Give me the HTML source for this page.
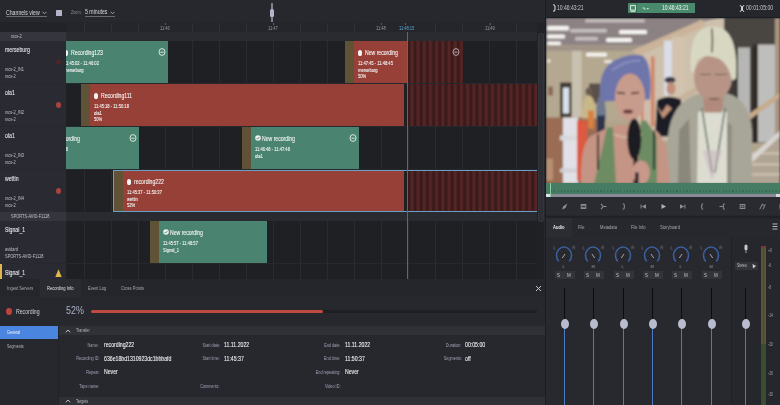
<!DOCTYPE html>
<html><head><meta charset="utf-8">
<style>
*{margin:0;padding:0;box-sizing:border-box}
html,body{width:780px;height:405px;overflow:hidden;background:#26272c;font-family:"Liberation Sans",sans-serif;color:#d8d8dc}
.a{position:absolute}
.t{position:absolute;white-space:nowrap;line-height:1;transform:scaleX(.74);transform-origin:0 0}
.lc{position:absolute;left:0;width:65.5px;background:#292a32}
.tr{position:absolute;left:66px;width:471px;background:#1f2024 repeating-linear-gradient(90deg,transparent 0,transparent 18px,#2a2b30 18px,#2a2b30 19px,transparent 19px,transparent 27px)}
.gl{position:absolute;left:0;width:65.5px;background:#35363d}
.gr{position:absolute;left:66px;width:471px;background:#2a2b30}
.blk{position:absolute;overflow:hidden}
.green{background:#4a8470}
.red{background:#974038}
.brown{background:#5f5236}
.stripe{background:repeating-linear-gradient(90deg,#3a1b1c 0px,#3a1b1c 1.6px,#552424 3.1px,#552424 4.6px,#3a1b1c 6.2px)}
.bt{font-size:7px;color:#f6f6f6;transform:scaleX(.73);-webkit-text-stroke:.1px #f6f6f6}
.bs{font-size:5.4px;color:#f4f4f4;transform:scaleX(.76);-webkit-text-stroke:.1px #f4f4f4}
.nm{font-size:7px;color:#ececf0;-webkit-text-stroke:.08px #ececf0}
.sm{font-size:5.2px;color:#c0c0c6;transform:scaleX(.76)}
.rt{font-size:5.4px;color:#9a9aa0}
.tick{position:absolute;top:23px;width:1px;height:9px;background:#303137}
.dot{position:absolute;width:4.2px;height:6px;border-radius:50%;background:#f4f4f4}
</style></head><body>
<div id="root" style="position:absolute;left:0;top:0;width:780px;height:405px;overflow:hidden;filter:blur(.3px)">
<div class="a" style="left:0;top:0;width:545px;height:405px;background:#27282d"></div>
<div class="t nm" style="left:6px;top:8.7px;color:#d8d8dc;-webkit-text-stroke:0">Channels view</div>
<div class="a" style="left:6px;top:16px;width:41px;height:1px;background:#6a6a70;"></div>
<svg class="a" style="left:42px;top:11px" width="5" height="4"><path d="M0.5 0.8 L2.5 2.8 L4.5 0.8" stroke="#b0b0b4" stroke-width="0.9" fill="none"/></svg>
<div class="a" style="left:55.5px;top:9.5px;width:6px;height:6.5px;background:#b4b4c8;border-radius:.5px"></div>
<div class="t " style="left:71px;top:9.5px;font-size:5px;color:#8c8c92">Zoom:</div>
<div class="t nm" style="left:85px;top:8.2px;color:#d8d8dc;-webkit-text-stroke:0">5 minutes</div>
<div class="a" style="left:85px;top:16px;width:30px;height:1px;background:#6a6a70;"></div>
<svg class="a" style="left:110px;top:11px" width="5" height="4"><path d="M0.5 0.8 L2.5 2.8 L4.5 0.8" stroke="#b0b0b4" stroke-width="0.9" fill="none"/></svg>
<div class="a" style="left:271.3px;top:3px;width:1.4px;height:18.5px;background:#80808e;"></div>
<div class="a" style="left:270px;top:8.8px;width:4px;height:8px;background:#b4b4c8;border-radius:1.5px"></div>
<div class="a" style="left:0px;top:22px;width:545px;height:10px;background:#222328;"></div>
<div class="a" style="left:66px;top:22px;width:471px;height:10px;background:#25262b;"></div>
<div class="tick" style="left:84.4px"></div>
<div class="tick" style="left:111.4px"></div>
<div class="tick" style="left:138.4px"></div>
<div class="tick" style="left:192.4px"></div>
<div class="tick" style="left:219.4px"></div>
<div class="tick" style="left:246.4px"></div>
<div class="tick" style="left:300.4px"></div>
<div class="tick" style="left:327.4px"></div>
<div class="tick" style="left:354.4px"></div>
<div class="tick" style="left:435.4px"></div>
<div class="tick" style="left:462.4px"></div>
<div class="tick" style="left:489.4px"></div>
<div class="tick" style="left:516.4px"></div>
<div class="t rt" style="left:159.8px;top:25.5px;color:#9a9aa0">11:46</div>
<div class="tick" style="left:165.20000000000002px;top:22.5px;height:2px;background:#5a5a62"></div>
<div class="t rt" style="left:267.8px;top:25.5px;color:#9a9aa0">11:47</div>
<div class="tick" style="left:273.2px;top:22.5px;height:2px;background:#5a5a62"></div>
<div class="t rt" style="left:375.8px;top:25.5px;color:#9a9aa0">11:48</div>
<div class="tick" style="left:381.2px;top:22.5px;height:2px;background:#5a5a62"></div>
<div class="t rt" style="left:399.4px;top:25.5px;color:#5aa8d8">11:48:15</div>
<div class="tick" style="left:404.79999999999995px;top:22.5px;height:2px;background:#5a5a62"></div>
<div class="t rt" style="left:484.5px;top:25.5px;color:#9a9aa0">11:49</div>
<div class="tick" style="left:489.9px;top:22.5px;height:2px;background:#5a5a62"></div>
<div class="gl" style="top:32px;height:9px"></div><div class="gr" style="top:32px;height:9px"></div>
<div class="t sm" style="left:11px;top:34px;">mcs-2</div>
<div class="lc" style="top:41px;height:42px"></div><div class="tr" style="top:41px;height:42px"></div>
<div class="lc" style="top:84px;height:42px"></div><div class="tr" style="top:84px;height:42px"></div>
<div class="lc" style="top:127px;height:42px"></div><div class="tr" style="top:127px;height:42px"></div>
<div class="lc" style="top:170px;height:42px"></div><div class="tr" style="top:170px;height:42px"></div>
<div class="lc" style="top:221px;height:42px"></div><div class="tr" style="top:221px;height:42px"></div>
<div class="lc" style="top:264px;height:15px"></div><div class="tr" style="top:264px;height:15px"></div>
<div class="gl" style="top:212px;height:9px"></div><div class="gr" style="top:212px;height:9px"></div>
<div class="a" style="left:0px;top:264px;width:1.8px;height:15px;background:#e0b848;"></div>
<div class="t nm" style="left:5px;top:46px;">merseburg</div>
<div class="t sm" style="left:5px;top:66.5px;">mcs-2_IN1</div>
<div class="t sm" style="left:5px;top:73.5px;">mcs-2</div>
<div class="a" style="left:55.6px;top:58.6px;width:5.8px;height:6.8px;border-radius:50%;background:#4a2628"></div>
<div class="t nm" style="left:5px;top:89px;">ola1</div>
<div class="t sm" style="left:5px;top:109.5px;">mcs-2_IN2</div>
<div class="t sm" style="left:5px;top:116.5px;">mcs-2</div>
<div class="a" style="left:55.6px;top:101.6px;width:5.8px;height:6.8px;border-radius:50%;background:#a8443c"></div>
<div class="t nm" style="left:5px;top:132px;">ola1</div>
<div class="t sm" style="left:5px;top:152.5px;">mcs-2_IN3</div>
<div class="t sm" style="left:5px;top:159.5px;">mcs-2</div>
<div class="t nm" style="left:5px;top:175px;">wettin</div>
<div class="t sm" style="left:5px;top:195.5px;">mcs-2_IN4</div>
<div class="t sm" style="left:5px;top:202.5px;">mcs-2</div>
<div class="a" style="left:55.6px;top:187.6px;width:5.8px;height:6.8px;border-radius:50%;background:#a8443c"></div>
<div class="t sm" style="left:11px;top:213.5px;">SPORTS-AVID-F1128</div>
<div class="t nm" style="left:5px;top:226px;">Signal_1</div>
<div class="t sm" style="left:5px;top:246.5px;">avidard</div>
<div class="t sm" style="left:5px;top:253.5px;">SPORTS-AVID-F1128</div>
<div class="t nm" style="left:5px;top:268.5px;">Signal_1</div>
<svg class="a" style="left:55px;top:268.8px" width="7" height="8.5"><path d="M3.5 0.3 L6.8 8.2 L0.2 8.2 Z" fill="#e0b848"/></svg>
<div class="a" style="left:66px;top:32px;width:471px;height:247px;overflow:hidden">
<div class="a" style="left:-66px;top:-32px;width:780px;height:405px">
<div class="blk green" style="left:66px;top:41px;width:102px;height:42px;"></div>
<div class="dot" style="left:63.7px;top:49.6px"></div>
<div class="t bt" style="left:70.5px;top:48.9px;">Recording123</div>
<div class="t bs" style="left:63.5px;top:60.9px;">11:45:02 - 11:46:02</div>
<div class="t bs" style="left:63.5px;top:67.7px;">merseburg</div>
<svg class="a" style="left:158.4px;top:48.2px" width="8" height="8"><ellipse cx="4" cy="4" rx="3" ry="3.4" fill="none" stroke="#d8e4de" stroke-width="1"/><path d="M2.4 4.2 H5.6" stroke="#d8e4de" stroke-width="1"/></svg>
<div class="blk brown" style="left:345px;top:41px;width:9px;height:42px;"></div>
<div class="blk red" style="left:354px;top:41px;width:54px;height:42px;"></div>
<div class="blk stripe" style="left:408px;top:41px;width:55px;height:42px;"></div>
<div class="dot" style="left:358.2px;top:49.6px"></div>
<div class="t bt" style="left:365px;top:48.9px;">New recording</div>
<div class="t bs" style="left:358px;top:60.9px;">11:47:45 - 11:48:45</div>
<div class="t bs" style="left:358px;top:67.7px;">merseburg</div>
<div class="t bs" style="left:358px;top:74.2px;">50%</div>
<svg class="a" style="left:452px;top:48.2px" width="8" height="8"><ellipse cx="4" cy="4" rx="3" ry="3.4" fill="none" stroke="#b8a8a8" stroke-width="1"/><path d="M2.4 4.2 H5.6" stroke="#b8a8a8" stroke-width="1"/></svg>
<div class="blk brown" style="left:81px;top:84px;width:9px;height:42px;"></div>
<div class="blk red" style="left:90px;top:84px;width:314px;height:42px;"></div>
<div class="blk stripe" style="left:408px;top:84px;width:129px;height:42px;"></div>
<div class="dot" style="left:94.2px;top:92.6px"></div>
<div class="t bt" style="left:101px;top:91.9px;">Recording111</div>
<div class="t bs" style="left:94px;top:103.9px;">11:45:18 - 11:50:18</div>
<div class="t bs" style="left:94px;top:110.7px;">ola1</div>
<div class="t bs" style="left:94px;top:117.2px;">50%</div>
<div class="blk green" style="left:66px;top:127px;width:73px;height:42px;"></div>
<div class="t bt" style="left:47.2px;top:134.9px;">New recording</div>
<div class="t bs" style="left:33px;top:146.9px;">11:44:48 - 11:45:48</div>
<svg class="a" style="left:129px;top:134.2px" width="8" height="8"><ellipse cx="4" cy="4" rx="3" ry="3.4" fill="none" stroke="#d8e4de" stroke-width="1"/><path d="M2.4 4.2 H5.6" stroke="#d8e4de" stroke-width="1"/></svg>
<div class="blk brown" style="left:242px;top:127px;width:9px;height:42px;"></div>
<div class="blk green" style="left:251px;top:127px;width:108px;height:42px;"></div>
<svg class="a" style="left:254.5px;top:135px" width="6" height="6"><circle cx="3" cy="3" r="2.8" fill="#f0f0f0"/><path d="M1.6 3.1 L2.6 4.1 L4.4 2" stroke="#4a8470" stroke-width="0.9" fill="none"/></svg>
<div class="t bt" style="left:262px;top:134.9px;">New recording</div>
<div class="t bs" style="left:255px;top:146.9px;">11:46:48 - 11:47:48</div>
<div class="t bs" style="left:255px;top:153.7px;">ola1</div>
<svg class="a" style="left:349px;top:134.2px" width="8" height="8"><ellipse cx="4" cy="4" rx="3" ry="3.4" fill="none" stroke="#d8e4de" stroke-width="1"/><path d="M2.4 4.2 H5.6" stroke="#d8e4de" stroke-width="1"/></svg>
<div class="blk brown" style="left:114px;top:170px;width:9px;height:42px;"></div>
<div class="blk red" style="left:123px;top:170px;width:281px;height:42px;"></div>
<div class="blk stripe" style="left:408px;top:170px;width:129px;height:42px;"></div>
<div class="dot" style="left:127.2px;top:178.6px"></div>
<div class="t bt" style="left:134px;top:177.9px;">recording222</div>
<div class="t bs" style="left:127px;top:189.9px;">11:45:37 - 11:50:37</div>
<div class="t bs" style="left:127px;top:196.7px;">wettin</div>
<div class="t bs" style="left:127px;top:203.2px;">52%</div>
<div class="blk " style="left:113px;top:170px;width:425px;height:42px;border:1px solid #6aa0c4"></div>
<div class="blk brown" style="left:150px;top:221px;width:9px;height:42px;"></div>
<div class="blk green" style="left:159px;top:221px;width:108px;height:42px;"></div>
<svg class="a" style="left:162.5px;top:229px" width="6" height="6"><circle cx="3" cy="3" r="2.8" fill="#f0f0f0"/><path d="M1.6 3.1 L2.6 4.1 L4.4 2" stroke="#4a8470" stroke-width="0.9" fill="none"/></svg>
<div class="t bt" style="left:170px;top:228.9px;">New recording</div>
<div class="t bs" style="left:163px;top:240.9px;">11:45:57 - 11:48:57</div>
<div class="t bs" style="left:163px;top:247.7px;">Signal_1</div>
<div class="a" style="left:407.2px;top:32px;width:1.1px;height:247px;background:#44708e;"></div>
</div></div>
<div class="a" style="left:537px;top:32px;width:7px;height:247px;background:#202126;"></div>
<div class="a" style="left:538.3px;top:33px;width:5.8px;height:189px;background:#2d2e34;border-radius:2px;border:.5px solid #34353b"></div>
<div class="a" style="left:0px;top:279px;width:545px;height:126px;background:#27282d;"></div>
<div class="a" style="left:0px;top:279px;width:545px;height:18px;background:#25262b;"></div>
<div class="a" style="left:39.5px;top:279px;width:41.5px;height:18px;background:#2a2b30;"></div>
<div class="t " style="left:7px;top:286.4px;font-size:5.5px;color:#a8a8b0">Ingest Servers</div>
<div class="t " style="left:47px;top:286.4px;font-size:5.5px;color:#e0e0e4">Recording Info</div>
<div class="t " style="left:88px;top:286.4px;font-size:5.5px;color:#a8a8b0">Event Log</div>
<div class="t " style="left:120.5px;top:286.4px;font-size:5.5px;color:#a8a8b0">Cross Points</div>
<svg class="a" style="left:535px;top:285px" width="7" height="7"><path d="M1 1 L6 6 M6 1 L1 6" stroke="#c8c8cc" stroke-width="1"/></svg>
<div class="a" style="left:6px;top:307.8px;width:6.2px;height:7.2px;border-radius:50%;background:#c0433b"></div>
<div class="t nm" style="left:15.5px;top:307.5px;color:#d0d0dc;-webkit-text-stroke:0">Recording</div>
<div class="t " style="left:66px;top:306px;font-size:10.4px;color:#a8b0c4;transform:scaleX(.86)">52%</div>
<div class="a" style="left:91px;top:309.5px;width:446px;height:3.5px;background:#1e1f23;border-radius:2px"></div>
<div class="a" style="left:91px;top:309.5px;width:232px;height:3.5px;background:#c14a40;border-radius:2px"></div>
<div class="a" style="left:0px;top:325.6px;width:58.3px;height:13.8px;background:#4a86e0;"></div>
<div class="t " style="left:7px;top:330px;font-size:5px;color:#f0f4ff">General</div>
<div class="t " style="left:7px;top:344.3px;font-size:5px;color:#b8b8c0">Segments</div>
<div class="a" style="left:58.3px;top:325.6px;width:1px;height:80px;background:#222327;"></div>
<div class="a" style="left:59px;top:325.8px;width:486px;height:9.6px;background:#303137;"></div>
<svg class="a" style="left:64.5px;top:328.5px" width="6" height="4"><path d="M0.8 3.3 L3 1 L5.2 3.3" stroke="#d0d0d4" stroke-width="0.9" fill="none"/></svg>
<div class="t " style="left:76px;top:328px;font-size:5px;color:#b8b8c0">Transfer</div>
<div class="a" style="left:59px;top:397px;width:486px;height:8px;background:#303137;"></div>
<svg class="a" style="left:64.5px;top:399.2px" width="6" height="4"><path d="M0.8 3.3 L3 1 L5.2 3.3" stroke="#d0d0d4" stroke-width="0.9" fill="none"/></svg>
<div class="t " style="left:76px;top:398.8px;font-size:5px;color:#b8b8c0">Targets</div>
<div class="a" style="left:-20.799999999999997px;top:342.79999999999995px;width:120px;text-align:right;line-height:1;font-size:5px"><span style="display:inline-block;white-space:nowrap;font-size:5px;color:#9ea2b8;transform:scaleX(.76);transform-origin:100% 0">Name:</span></div>
<div class="t " style="left:103.5px;top:341.09999999999997px;font-size:7px;color:#f0f0f4;-webkit-text-stroke:.1px #f0f0f4">recording222</div>
<div class="a" style="left:-20.799999999999997px;top:356.4px;width:120px;text-align:right;line-height:1;font-size:5px"><span style="display:inline-block;white-space:nowrap;font-size:5px;color:#9ea2b8;transform:scaleX(.76);transform-origin:100% 0">Recording ID:</span></div>
<div class="t " style="left:103.5px;top:354.7px;font-size:7px;color:#f0f0f4;-webkit-text-stroke:.1px #f0f0f4">636e18bd1310923dc1bbbafd</div>
<div class="a" style="left:-20.799999999999997px;top:370.09999999999997px;width:120px;text-align:right;line-height:1;font-size:5px"><span style="display:inline-block;white-space:nowrap;font-size:5px;color:#9ea2b8;transform:scaleX(.76);transform-origin:100% 0">Repeat:</span></div>
<div class="t " style="left:103.5px;top:368.4px;font-size:7px;color:#f0f0f4;-webkit-text-stroke:.1px #f0f0f4">Never</div>
<div class="a" style="left:-20.799999999999997px;top:384.0px;width:120px;text-align:right;line-height:1;font-size:5px"><span style="display:inline-block;white-space:nowrap;font-size:5px;color:#9ea2b8;transform:scaleX(.76);transform-origin:100% 0">Tape name:</span></div>
<div class="a" style="left:99.69999999999999px;top:342.79999999999995px;width:120px;text-align:right;line-height:1;font-size:5px"><span style="display:inline-block;white-space:nowrap;font-size:5px;color:#9ea2b8;transform:scaleX(.76);transform-origin:100% 0">Start date:</span></div>
<div class="t " style="left:224px;top:341.09999999999997px;font-size:7px;color:#f0f0f4;-webkit-text-stroke:.1px #f0f0f4">11.11.2022</div>
<div class="a" style="left:99.69999999999999px;top:356.4px;width:120px;text-align:right;line-height:1;font-size:5px"><span style="display:inline-block;white-space:nowrap;font-size:5px;color:#9ea2b8;transform:scaleX(.76);transform-origin:100% 0">Start time:</span></div>
<div class="t " style="left:224px;top:354.7px;font-size:7px;color:#f0f0f4;-webkit-text-stroke:.1px #f0f0f4">11:45:37</div>
<div class="a" style="left:99.69999999999999px;top:384.0px;width:120px;text-align:right;line-height:1;font-size:5px"><span style="display:inline-block;white-space:nowrap;font-size:5px;color:#9ea2b8;transform:scaleX(.76);transform-origin:100% 0">Comments:</span></div>
<div class="a" style="left:220.39999999999998px;top:342.79999999999995px;width:120px;text-align:right;line-height:1;font-size:5px"><span style="display:inline-block;white-space:nowrap;font-size:5px;color:#9ea2b8;transform:scaleX(.76);transform-origin:100% 0">End date:</span></div>
<div class="t " style="left:345px;top:341.09999999999997px;font-size:7px;color:#f0f0f4;-webkit-text-stroke:.1px #f0f0f4">11.11.2022</div>
<div class="a" style="left:220.39999999999998px;top:356.4px;width:120px;text-align:right;line-height:1;font-size:5px"><span style="display:inline-block;white-space:nowrap;font-size:5px;color:#9ea2b8;transform:scaleX(.76);transform-origin:100% 0">End time:</span></div>
<div class="t " style="left:345px;top:354.7px;font-size:7px;color:#f0f0f4;-webkit-text-stroke:.1px #f0f0f4">11:50:37</div>
<div class="a" style="left:220.39999999999998px;top:370.09999999999997px;width:120px;text-align:right;line-height:1;font-size:5px"><span style="display:inline-block;white-space:nowrap;font-size:5px;color:#9ea2b8;transform:scaleX(.76);transform-origin:100% 0">End repeating:</span></div>
<div class="t " style="left:345px;top:368.4px;font-size:7px;color:#f0f0f4;-webkit-text-stroke:.1px #f0f0f4">Never</div>
<div class="a" style="left:220.39999999999998px;top:384.0px;width:120px;text-align:right;line-height:1;font-size:5px"><span style="display:inline-block;white-space:nowrap;font-size:5px;color:#9ea2b8;transform:scaleX(.76);transform-origin:100% 0">Video ID:</span></div>
<div class="a" style="left:341.7px;top:342.79999999999995px;width:120px;text-align:right;line-height:1;font-size:5px"><span style="display:inline-block;white-space:nowrap;font-size:5px;color:#9ea2b8;transform:scaleX(.76);transform-origin:100% 0">Duration:</span></div>
<div class="t " style="left:465.3px;top:341.09999999999997px;font-size:7px;color:#f0f0f4;-webkit-text-stroke:.1px #f0f0f4">00:05:00</div>
<div class="a" style="left:341.7px;top:356.4px;width:120px;text-align:right;line-height:1;font-size:5px"><span style="display:inline-block;white-space:nowrap;font-size:5px;color:#9ea2b8;transform:scaleX(.76);transform-origin:100% 0">Segments:</span></div>
<div class="t " style="left:465.3px;top:354.7px;font-size:7px;color:#f0f0f4;-webkit-text-stroke:.1px #f0f0f4">off</div>
<div class="a" style="left:545px;top:0px;width:2px;height:405px;background:#1c1d21;"></div>
<div class="a" style="left:546px;top:0px;width:234px;height:405px;background:#26272c;"></div>
<svg class="a" style="left:551.5px;top:4px" width="4" height="8"><path d="M1 0.8 Q3 0.8 3 2.5 V5.5 Q3 7.2 1 7.2" stroke="#d8d8dc" stroke-width="1.1" fill="none"/></svg>
<div class="t " style="left:557px;top:4.2px;font-size:7px;color:#c8c8d0;transform:scaleX(.72)">10:46:43:21</div>
<div class="a" style="left:628.2px;top:3.1px;width:67.2px;height:9.7px;background:#4a8a6c;"></div>
<div class="a" style="left:636.2px;top:3.1px;width:0.8px;height:9.7px;background:#3a6e56;"></div>
<svg class="a" style="left:629.5px;top:4.5px" width="6" height="7"><rect x="0.6" y="0.6" width="4.8" height="4.5" fill="none" stroke="#e8f0ec" stroke-width="0.9"/><path d="M0.6 6.3 H5.4" stroke="#e8f0ec" stroke-width="0.9"/></svg>
<svg class="a" style="left:641.5px;top:5.5px" width="8" height="5"><path d="M0.5 2 H2.8 V3.8" stroke="#e0ece6" stroke-width=".8" fill="none"/><path d="M4.6 2 L7 2 L5.8 3.6 Z" fill="#e0ece6"/></svg>
<div class="t " style="left:661.5px;top:4.6px;font-size:6.8px;color:#f0f6f2;transform:scaleX(.74)">10:46:43:21</div>
<svg class="a" style="left:739px;top:4.5px" width="6" height="7"><path d="M0.8 0.6 Q2.6 0.6 2.6 2 V5 Q2.6 6.4 0.8 6.4 M5.2 0.6 Q3.5 0.6 3.5 2 V5 Q3.5 6.4 5.2 6.4" stroke="#d8d8dc" stroke-width="1" fill="none"/></svg>
<div class="t " style="left:745.8px;top:4.3px;font-size:7px;color:#c8c8d0;transform:scaleX(.735)">00:01:05:00</div>
<div class="a" style="left:546px;top:16.5px;width:234px;height:1.2px;background:#1c1d21;"></div>
<svg class="a" style="left:546px;top:17.5px" width="234" height="166" viewBox="546 17.5 234 166"><defs><filter id="bl" x="-5%" y="-5%" width="110%" height="110%"><feGaussianBlur stdDeviation="1.1"/></filter><clipPath id="vc"><rect x="546" y="17.5" width="234" height="166"/></clipPath></defs><g clip-path="url(#vc)"><g filter="url(#bl)"><rect x="546" y="17.5" width="234" height="166" fill="#b0a48c"/><rect x="546" y="48" width="100" height="72" fill="#b4a890"/><rect x="572" y="50" width="9.5" height="133" fill="#c9c1b0"/><rect x="560" y="82" width="11.5" height="38" fill="#3e3832"/><rect x="563" y="87" width="6" height="26" fill="#d8e0e8"/><rect x="548" y="86" width="5" height="9" fill="#8a6a58"/><rect x="589" y="83" width="11" height="20" fill="#5a5048"/><path d="M546 17.5 H720 L700 22 L640 50 L546 50 Z" fill="#8c8284"/><path d="M546 44 H650 L640 50 H546 Z" fill="#a09488"/><rect x="547" y="25.5" width="22" height="4.5" rx="1.5" fill="#f6f4f0" opacity="1"/><rect x="570" y="28.5" width="37" height="3.5" rx="1.5" fill="#f6f4f0" opacity="0.55"/><rect x="619" y="29.5" width="28" height="4" rx="1.5" fill="#f6f4f0" opacity="1"/><rect x="547" y="34" width="18" height="4" rx="1.5" fill="#f6f4f0" opacity="1"/><rect x="575" y="36.5" width="23" height="3.5" rx="1.5" fill="#f6f4f0" opacity="0.55"/><rect x="606" y="37.5" width="26" height="4" rx="1.5" fill="#f6f4f0" opacity="1"/><rect x="547" y="41" width="14" height="3.5" rx="1.5" fill="#f6f4f0" opacity="1"/><rect x="586" y="52.3" width="21" height="3.6" rx="1.5" fill="#f6f4f0" opacity="1"/><rect x="585" y="18.5" width="60" height="3.5" rx="1.5" fill="#f6f4f0" opacity="0.5"/><rect x="547" y="59" width="3.5" height="3" rx="1.5" fill="#f6f4f0" opacity="0.9"/><rect x="604" y="59.5" width="8" height="3" rx="1.5" fill="#f6f4f0" opacity="0.8"/><path d="M636 52 L700 22 L720 17.5 H724 V140 H636 Z" fill="#cdc0ac"/><path d="M632 50 L702 19 L706 25 L638 56 Z" fill="#cbb49a"/><rect x="640" y="56" width="12" height="80" fill="#d0bcaa"/><rect x="641" y="56" width="2.5" height="70" fill="#cc8a6c"/><rect x="651" y="56" width="3.5" height="70" fill="#d08466"/><rect x="664" y="40" width="9" height="55" fill="#dadce6"/><rect x="672" y="36" width="13" height="110" fill="#d2c2ae"/><path d="M655 110 L700 84 L702 89 L658 115 Z" fill="#c8b49c"/><rect x="724" y="17.5" width="56" height="125" fill="#3c3834"/><rect x="724" y="17.5" width="56" height="30" fill="#4a4540"/><rect x="738" y="47" width="12" height="95" fill="#b6b6b4"/><rect x="758" y="44" width="17" height="98" fill="#bebebc"/><rect x="753" y="44" width="4" height="98" fill="#2e2a26"/><rect x="775" y="17.5" width="5" height="166" fill="#a89480"/><path d="M748 162 L780 136 V183.5 H748 Z" fill="#b0a494"/><rect x="752" y="152" width="28" height="1.8" fill="#d4c8b8"/><rect x="752" y="163" width="28" height="1.8" fill="#d4c8b8"/><rect x="752" y="173" width="28" height="1.8" fill="#d4c8b8"/><path d="M748 114 L780 92 L780 97 L750 119 Z" fill="#c8aa8a"/><path d="M748 158 L780 130 L780 136 L750 164 Z" fill="#d8d4d0"/><rect x="546" y="117" width="55" height="67" fill="#9a6c52"/><rect x="546" y="158" width="7" height="22" fill="#c0a080" opacity=".7"/><ellipse cx="589" cy="91" rx="3.5" ry="4" fill="#6a5a50"/><path d="M582 118 Q582 96 589 95 Q596 96 596 118 Z" fill="#c8b888"/><rect x="588" y="110" width="6" height="18" fill="#d88040"/><path d="M596 120 Q596 96 601 94 Q606 96 606 120 Z" fill="#707890"/><rect x="597" y="115" width="8" height="22" fill="#2e3448"/><rect x="563" y="117" width="15" height="66" fill="#e0e0e6"/><rect x="560" y="135" width="27" height="5" fill="#d8d8dc"/><rect x="560" y="168" width="20" height="4" fill="#d0d0d4"/><rect x="577" y="120" width="10" height="60" fill="#dd5a40"/><ellipse cx="670" cy="79.5" rx="5.5" ry="3.2" fill="#3a3a48"/><ellipse cx="671" cy="88" rx="4.5" ry="6.5" fill="#c09078"/><path d="M655 136 L657 100 Q668 93 681 99 L683 136 Z" fill="#1e1e28"/><path d="M656 104 L663 118 L672 108 L667 104 L662 112 Z" fill="#c09078"/><path d="M667 183.5 L668 135 Q672 100 700 93 L728 93 Q750 100 752 130 L752 183.5 Z" fill="#a8a698"/><path d="M678 183.5 L679 130 L689 118 L691 183.5 Z" fill="#8a887c"/><path d="M723 183.5 L725 120 L732 125 L731 183.5 Z" fill="#908e82"/><path d="M697 183.5 L698 112 Q712 104 727 112 L727 183.5 Z" fill="#dcdcd0"/><path d="M702 108 L712 172 M725 108 L715 172" stroke="#3a5048" stroke-width="1.3" fill="none"/><path d="M703 150 L712 180 L722 150 Z" fill="#c8b8c0" opacity=".6"/><path d="M703 90 L724 90 L722 112 L704 112 Z" fill="#b08a7c"/><ellipse cx="713" cy="77" rx="19" ry="23" fill="#b89486"/><path d="M691 72 Q687 26 713 26 Q739 26 736 78 L732 80 Q729 64 719 58 Q704 52 697 60 L693 72 Z" fill="#d8d8c2"/><path d="M712 28 Q713 40 712 52" stroke="#5a5240" stroke-width="1.6" fill="none"/><path d="M700 74 H711 M715 74 H727" stroke="#6a5a52" stroke-width="1.1"/><path d="M708 98 Q714 100 720 98" stroke="#8a6a60" stroke-width="1"/><path d="M581 183.5 Q580 145 590 136 L606 128 L620 124 L640 124 L656 130 Q668 138 670 183.5 Z" fill="#c49484"/><path d="M594 183.5 L607 127 L613 127 L616 183.5 Z" fill="#6e8c64"/><path d="M637 183.5 L641 120 L646 120 L657 136 L657 183.5 Z" fill="#6e8c64"/><path d="M598 134 L598 169" stroke="#1a1a1a" stroke-width="1.8"/><path d="M654 131 L654 169" stroke="#1a1a1a" stroke-width="1.8"/><path d="M601 101 Q597 74 610 63 Q626 52 642 55 Q653 62 650 99 Z" fill="#6e74aa"/><ellipse cx="630" cy="97" rx="15" ry="24" fill="#c89c8c"/><path d="M604 98 Q604 72 622 62 Q642 55 649 72 L650 80 Q646 68 634 69 Q616 74 610 98 Z" fill="#6e74aa"/><path d="M612 70 Q624 60 640 60" stroke="#8a90c0" stroke-width="2" fill="none"/><path d="M617 92 L625 93 M631 93 L639 92" stroke="#3a2a2a" stroke-width="1.3"/><ellipse cx="628" cy="111" rx="5" ry="2" fill="#6a3a38"/><path d="M614 134 Q628 140 642 134" stroke="#e0d0c0" stroke-width="1" fill="none"/><ellipse cx="634.3" cy="138.5" rx="7" ry="20.5" fill="#1c1c20"/><rect x="633.5" y="152" width="4.5" height="31" fill="#1c1c20"/><ellipse cx="641" cy="172" rx="9" ry="12" fill="#c8988a"/><rect x="635" y="172" width="3.5" height="11" fill="#1c1c20"/></g></g></svg>
<div class="a" style="left:546px;top:183.3px;width:234px;height:10.3px;background:#467c63;"></div>
<div class="a" style="left:551px;top:190px;width:229px;height:2px;background:repeating-linear-gradient(90deg,#3a6a54 0,#3a6a54 1.2px,transparent 1.2px,transparent 3.3px)"></div>
<div class="a" style="left:546px;top:193.6px;width:234px;height:3.4px;background:#8a8a96;"></div>
<div class="a" style="left:546px;top:193.6px;width:4px;height:3.4px;background:#e0e0ee;"></div>
<div class="a" style="left:776px;top:193.6px;width:4px;height:3.4px;background:#d8d8e4;"></div>
<div class="a" style="left:550px;top:183.3px;width:1.2px;height:13.7px;background:#90d0a8;"></div>
<div class="a" style="left:546px;top:197.3px;width:234px;height:18.2px;background:#2a2b30;"></div>
<div class="a" style="left:546px;top:215.5px;width:234px;height:3px;background:#1f2024;"></div>
<svg class="a" style="left:560.5px;top:203px" width="7" height="7"><path d="M1.2 6.5 L2 3.5 L6.3 0.6 L4.5 5 Z" fill="#8c8c98"/></svg>
<svg class="a" style="left:580.3px;top:203px" width="7" height="7"><rect x="0.7" y="1" width="5.6" height="5" fill="#8c8c98"/><rect x="1.5" y="2.7" width="4" height="1.6" fill="#3a3b42"/></svg>
<svg class="a" style="left:600.1px;top:203px" width="7" height="7"><path d="M1 0.8 L3.2 3.5 L1 6.2 M3.2 3.5 H6.5" stroke="#8c8c98" stroke-width="1.1" fill="none"/></svg>
<svg class="a" style="left:619.9px;top:203px" width="7" height="7"><path d="M2.8 0.8 Q4.3 0.8 4.3 2.2 V4.8 Q4.3 6.2 2.8 6.2" stroke="#8c8c98" stroke-width="1.1" fill="none"/></svg>
<svg class="a" style="left:639.7px;top:203px" width="7" height="7"><path d="M6 1.2 L1.8 3.5 L6 5.8 Z" fill="#8c8c98"/><rect x="0.6" y="1.5" width="1" height="4" fill="#8c8c98"/></svg>
<svg class="a" style="left:659.5px;top:203px" width="7" height="7"><path d="M1.5 1 L6 3.5 L1.5 6 Z" fill="#b0b0bc"/></svg>
<svg class="a" style="left:679.3px;top:203px" width="7" height="7"><path d="M1 1.2 L5.2 3.5 L1 5.8 Z" fill="#8c8c98"/><rect x="5.4" y="1.5" width="1" height="4" fill="#8c8c98"/></svg>
<svg class="a" style="left:699.1px;top:203px" width="7" height="7"><path d="M4.2 0.8 Q2.7 0.8 2.7 2.2 V4.8 Q2.7 6.2 4.2 6.2" stroke="#8c8c98" stroke-width="1.1" fill="none"/></svg>
<svg class="a" style="left:718.9px;top:203px" width="7" height="7"><path d="M5.8 0.8 Q4.3 0.8 4.3 2.2 V4.8 Q4.3 6.2 5.8 6.2 M3.5 3.5 H0.5" stroke="#8c8c98" stroke-width="1.1" fill="none"/></svg>
<svg class="a" style="left:738.7px;top:203px" width="7" height="7"><rect x="0.7" y="1" width="5.6" height="5" fill="#8c8c98"/><rect x="1.6" y="2" width="3.8" height="3" fill="#3a3b42"/><rect x="2.6" y="2.8" width="1.8" height="1.4" fill="#8c8c98"/></svg>
<svg class="a" style="left:758.5px;top:203px" width="7" height="7"><path d="M0.8 6.3 L3.5 0.8 L4.5 3 M4 6.3 L6.3 1.2" stroke="#8c8c98" stroke-width="1" fill="none"/></svg>
<svg class="a" style="left:778.3px;top:203px" width="7" height="7"><path d="M1.5 1 L6 3.5 L1.5 6 Z" fill="#8c8c98"/></svg>
<div class="a" style="left:546px;top:217.5px;width:234px;height:19px;background:#27282d;"></div>
<div class="a" style="left:546px;top:217.5px;width:25.5px;height:19px;background:#2c2d33;"></div>
<div class="t " style="left:553px;top:224.5px;font-size:5.5px;color:#e8e8ec;font-weight:bold">Audio</div>
<div class="t " style="left:578px;top:224.5px;font-size:5.5px;color:#a8a8b0">File</div>
<div class="t " style="left:600px;top:224.5px;font-size:5.5px;color:#a8a8b0">Metadata</div>
<div class="t " style="left:631px;top:224.5px;font-size:5.5px;color:#a8a8b0">File Info</div>
<div class="t " style="left:660px;top:224.5px;font-size:5.5px;color:#a8a8b0">Storyboard</div>
<svg class="a" style="left:772px;top:223px" width="6" height="7"><path d="M0.5 1 H5.5 M0.5 3.5 H5.5 M0.5 6 H5.5" stroke="#b8b8bc" stroke-width="1"/></svg>
<div class="a" style="left:546px;top:236.5px;width:185px;height:169px;background:#28292e;"></div>
<div class="a" style="left:730.5px;top:236.5px;width:1px;height:169px;background:#1f2024;"></div>
<div class="a" style="left:731.5px;top:236.5px;width:48.5px;height:169px;background:#26272c;"></div>
<svg class="a" style="left:552px;top:243px" width="24" height="26"><path d="M6.7 18.5 A7.5 8.5 0 1 1 17.3 18.5" stroke="#3a5e9e" stroke-width="1.6" fill="none"/><path d="M10.3 15 L13 11" stroke="#a8a8b4" stroke-width="1"/><path d="M2 3 V6.3 H3.6" stroke="#6a6a74" stroke-width=".55" fill="none"/><path d="M20.8 6.3 V3 H22 Q23.1 3 23.1 3.9 Q23.1 4.8 22 4.8 H20.8 M22 4.8 L23.1 6.3" stroke="#6a6a74" stroke-width=".55" fill="none"/><text x="10.6" y="24.5" font-size="4" fill="#9a9aa2" font-family="Liberation Sans">L</text></svg>
<div class="a" style="left:554.6px;top:271px;width:10.2px;height:8px;background:#33343a;"></div>
<div class="a" style="left:565.2px;top:271px;width:10.2px;height:8px;background:#33343a;"></div>
<div class="t " style="left:557.2px;top:272.3px;font-size:6px;color:#c4c4ca">S</div>
<div class="t " style="left:567.2px;top:272.3px;font-size:6px;color:#c4c4ca">M</div>
<div class="a" style="left:564px;top:288px;width:1.4px;height:35px;background:#0c0c0e;"></div>
<div class="a" style="left:564px;top:323px;width:1.4px;height:82px;background:#4a7ac4;"></div>
<div class="a" style="left:560.7px;top:318.5px;width:8px;height:10px;border-radius:50%;background:#b8bccc"></div>
<svg class="a" style="left:581px;top:243px" width="24" height="26"><path d="M6.7 18.5 A7.5 8.5 0 1 1 17.3 18.5" stroke="#3a5e9e" stroke-width="1.6" fill="none"/><path d="M13.7 15 L11 11" stroke="#a8a8b4" stroke-width="1"/><path d="M2 3 V6.3 H3.6" stroke="#6a6a74" stroke-width=".55" fill="none"/><path d="M20.8 6.3 V3 H22 Q23.1 3 23.1 3.9 Q23.1 4.8 22 4.8 H20.8 M22 4.8 L23.1 6.3" stroke="#6a6a74" stroke-width=".55" fill="none"/><text x="10.6" y="24.5" font-size="4" fill="#9a9aa2" font-family="Liberation Sans">M</text></svg>
<div class="a" style="left:583.6px;top:271px;width:10.2px;height:8px;background:#33343a;"></div>
<div class="a" style="left:594.2px;top:271px;width:10.2px;height:8px;background:#33343a;"></div>
<div class="t " style="left:586.2px;top:272.3px;font-size:6px;color:#c4c4ca">S</div>
<div class="t " style="left:596.2px;top:272.3px;font-size:6px;color:#c4c4ca">M</div>
<div class="a" style="left:593px;top:288px;width:1.4px;height:35px;background:#0c0c0e;"></div>
<div class="a" style="left:593px;top:323px;width:1.4px;height:82px;background:#4a7ac4;"></div>
<div class="a" style="left:589.7px;top:318.5px;width:8px;height:10px;border-radius:50%;background:#b8bccc"></div>
<svg class="a" style="left:611px;top:243px" width="24" height="26"><path d="M6.7 18.5 A7.5 8.5 0 1 1 17.3 18.5" stroke="#3a5e9e" stroke-width="1.6" fill="none"/><path d="M10.3 15 L13 11" stroke="#a8a8b4" stroke-width="1"/><path d="M2 3 V6.3 H3.6" stroke="#6a6a74" stroke-width=".55" fill="none"/><path d="M20.8 6.3 V3 H22 Q23.1 3 23.1 3.9 Q23.1 4.8 22 4.8 H20.8 M22 4.8 L23.1 6.3" stroke="#6a6a74" stroke-width=".55" fill="none"/><text x="10.6" y="24.5" font-size="4" fill="#9a9aa2" font-family="Liberation Sans">L</text></svg>
<div class="a" style="left:613.6px;top:271px;width:10.2px;height:8px;background:#33343a;"></div>
<div class="a" style="left:624.2px;top:271px;width:10.2px;height:8px;background:#33343a;"></div>
<div class="t " style="left:616.2px;top:272.3px;font-size:6px;color:#c4c4ca">S</div>
<div class="t " style="left:626.2px;top:272.3px;font-size:6px;color:#c4c4ca">M</div>
<div class="a" style="left:623px;top:288px;width:1.4px;height:35px;background:#0c0c0e;"></div>
<div class="a" style="left:623px;top:323px;width:1.4px;height:82px;background:#4a7ac4;"></div>
<div class="a" style="left:619.7px;top:318.5px;width:8px;height:10px;border-radius:50%;background:#b8bccc"></div>
<svg class="a" style="left:640px;top:243px" width="24" height="26"><path d="M6.7 18.5 A7.5 8.5 0 1 1 17.3 18.5" stroke="#3a5e9e" stroke-width="1.6" fill="none"/><path d="M13.7 15 L11 11" stroke="#a8a8b4" stroke-width="1"/><path d="M2 3 V6.3 H3.6" stroke="#6a6a74" stroke-width=".55" fill="none"/><path d="M20.8 6.3 V3 H22 Q23.1 3 23.1 3.9 Q23.1 4.8 22 4.8 H20.8 M22 4.8 L23.1 6.3" stroke="#6a6a74" stroke-width=".55" fill="none"/><text x="10.6" y="24.5" font-size="4" fill="#9a9aa2" font-family="Liberation Sans">M</text></svg>
<div class="a" style="left:642.6px;top:271px;width:10.2px;height:8px;background:#33343a;"></div>
<div class="a" style="left:653.2px;top:271px;width:10.2px;height:8px;background:#33343a;"></div>
<div class="t " style="left:645.2px;top:272.3px;font-size:6px;color:#c4c4ca">S</div>
<div class="t " style="left:655.2px;top:272.3px;font-size:6px;color:#c4c4ca">M</div>
<div class="a" style="left:652px;top:288px;width:1.4px;height:35px;background:#0c0c0e;"></div>
<div class="a" style="left:652px;top:323px;width:1.4px;height:82px;background:#4a7ac4;"></div>
<div class="a" style="left:648.7px;top:318.5px;width:8px;height:10px;border-radius:50%;background:#b8bccc"></div>
<svg class="a" style="left:669px;top:243px" width="24" height="26"><path d="M6.7 18.5 A7.5 8.5 0 1 1 17.3 18.5" stroke="#3a5e9e" stroke-width="1.6" fill="none"/><path d="M10.3 15 L13 11" stroke="#a8a8b4" stroke-width="1"/><path d="M2 3 V6.3 H3.6" stroke="#6a6a74" stroke-width=".55" fill="none"/><path d="M20.8 6.3 V3 H22 Q23.1 3 23.1 3.9 Q23.1 4.8 22 4.8 H20.8 M22 4.8 L23.1 6.3" stroke="#6a6a74" stroke-width=".55" fill="none"/><text x="10.6" y="24.5" font-size="4" fill="#9a9aa2" font-family="Liberation Sans">L</text></svg>
<div class="a" style="left:671.6px;top:271px;width:10.2px;height:8px;background:#33343a;"></div>
<div class="a" style="left:682.2px;top:271px;width:10.2px;height:8px;background:#33343a;"></div>
<div class="t " style="left:674.2px;top:272.3px;font-size:6px;color:#c4c4ca">S</div>
<div class="t " style="left:684.2px;top:272.3px;font-size:6px;color:#c4c4ca">M</div>
<div class="a" style="left:681px;top:288px;width:1.4px;height:35px;background:#0c0c0e;"></div>
<div class="a" style="left:681px;top:323px;width:1.4px;height:82px;background:#4a7ac4;"></div>
<div class="a" style="left:677.7px;top:318.5px;width:8px;height:10px;border-radius:50%;background:#b8bccc"></div>
<svg class="a" style="left:699px;top:243px" width="24" height="26"><path d="M6.7 18.5 A7.5 8.5 0 1 1 17.3 18.5" stroke="#3a5e9e" stroke-width="1.6" fill="none"/><path d="M13.7 15 L11 11" stroke="#a8a8b4" stroke-width="1"/><path d="M2 3 V6.3 H3.6" stroke="#6a6a74" stroke-width=".55" fill="none"/><path d="M20.8 6.3 V3 H22 Q23.1 3 23.1 3.9 Q23.1 4.8 22 4.8 H20.8 M22 4.8 L23.1 6.3" stroke="#6a6a74" stroke-width=".55" fill="none"/><text x="10.6" y="24.5" font-size="4" fill="#9a9aa2" font-family="Liberation Sans">M</text></svg>
<div class="a" style="left:701.6px;top:271px;width:10.2px;height:8px;background:#33343a;"></div>
<div class="a" style="left:712.2px;top:271px;width:10.2px;height:8px;background:#33343a;"></div>
<div class="t " style="left:704.2px;top:272.3px;font-size:6px;color:#c4c4ca">S</div>
<div class="t " style="left:714.2px;top:272.3px;font-size:6px;color:#c4c4ca">M</div>
<div class="a" style="left:711px;top:288px;width:1.4px;height:35px;background:#0c0c0e;"></div>
<div class="a" style="left:711px;top:323px;width:1.4px;height:82px;background:#4a7ac4;"></div>
<div class="a" style="left:707.7px;top:318.5px;width:8px;height:10px;border-radius:50%;background:#b8bccc"></div>
<svg class="a" style="left:743px;top:244px" width="6" height="10"><rect x="1.5" y="0.5" width="3" height="6" rx="1.5" fill="#c8c8cc"/><path d="M3 7 V9" stroke="#c8c8cc" stroke-width=".8"/></svg>
<div class="a" style="left:735px;top:262px;width:23px;height:8px;background:#33343a;"></div>
<div class="t " style="left:737px;top:264px;font-size:4.5px;color:#c0c0c8">Stereo</div>
<svg class="a" style="left:752px;top:263px" width="5" height="6"><path d="M0.5 1 L4 3 L1 5.5 Z" fill="#d0d0d4"/></svg>
<div class="a" style="left:745px;top:288px;width:1.4px;height:35px;background:#0c0c0e;"></div>
<div class="a" style="left:745px;top:323px;width:1.4px;height:82px;background:#4a7ac4;"></div>
<div class="a" style="left:741.7px;top:318.5px;width:8px;height:10px;border-radius:50%;background:#b8bccc"></div>
<div class="a" style="left:760.5px;top:246px;width:5.5px;height:159px;background:#3a4c30;"></div>
<div class="a" style="left:760.5px;top:246px;width:5.5px;height:98px;background:#5a5538;"></div>
<div class="a" style="left:762.9px;top:246px;width:0.6px;height:159px;background:#4a4a34;"></div>
<div class="a" style="left:760.5px;top:246px;width:5.5px;height:1.6px;background:#7a3a30;"></div>
<div class="t " style="left:768px;top:249.3px;font-size:4.6px;color:#a0a0a8">+0</div>
<div class="t " style="left:768px;top:263.8px;font-size:4.6px;color:#a0a0a8">-6</div>
<div class="t " style="left:768px;top:285.8px;font-size:4.6px;color:#a0a0a8">-8</div>
<div class="t " style="left:768px;top:313.8px;font-size:4.6px;color:#a0a0a8">-14</div>
<div class="t " style="left:768px;top:342.8px;font-size:4.6px;color:#a0a0a8">-20</div>
<div class="t " style="left:768px;top:371.8px;font-size:4.6px;color:#a0a0a8">-26</div>
<div class="t " style="left:768px;top:392.8px;font-size:4.6px;color:#a0a0a8">-30</div>
</div>
</body></html>
